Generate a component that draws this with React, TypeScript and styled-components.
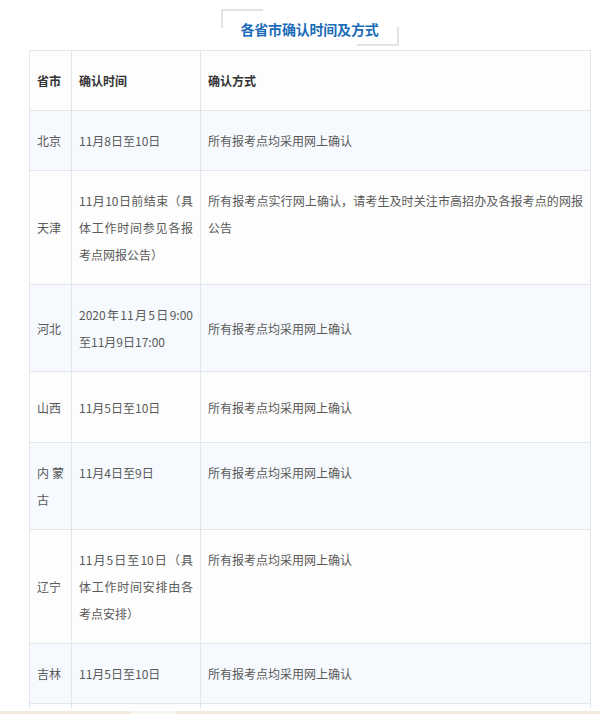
import React from "react";
import styled, { createGlobalStyle } from "styled-components";

const GlobalStyle = createGlobalStyle`
  html, body {
    margin: 0;
    padding: 0;
    background: #ffffff;
  }
  body {
    font-family: "Noto Sans CJK SC", "Noto Sans", sans-serif;
    overflow: hidden;
  }
`;

type Row = {
  province: string;
  time: string;
  method: string;
  timeTop?: boolean;
  methodTop?: boolean;
  height?: number;
};

const rows: Row[] = [
  { province: "北京", time: "11月8日至10日", method: "所有报考点均采用网上确认" },
  {
    province: "天津",
    time: "11月10日前结束（具体工作时间参见各报考点网报公告）",
    method: "所有报考点实行网上确认，请考生及时关注市高招办及各报考点的网报公告",
    methodTop: true,
  },
  { province: "河北", time: "2020年11月5日9:00至11月9日17:00", method: "所有报考点均采用网上确认" },
  { province: "山西", time: "11月5日至10日", method: "所有报考点均采用网上确认", height: 71 },
  {
    province: "内蒙古",
    time: "11月4日至9日",
    method: "所有报考点均采用网上确认",
    timeTop: true,
    methodTop: true,
  },
  {
    province: "辽宁",
    time: "11月5日至10日（具体工作时间安排由各考点安排）",
    method: "所有报考点均采用网上确认",
    methodTop: true,
  },
  { province: "吉林", time: "11月5日至10日", method: "所有报考点均采用网上确认" },
];

function App() {
  return (
    <Page>
      <GlobalStyle />
      <Heading>
        <TitleFrame>各省市确认时间及方式</TitleFrame>
      </Heading>
      <Table>
        <colgroup>
          <col style={{ width: 42 }} />
          <col style={{ width: 129 }} />
          <col />
        </colgroup>
        <thead>
          <Tr $even={false}>
            <Th>省市</Th>
            <Th>确认时间</Th>
            <Th>确认方式</Th>
          </Tr>
        </thead>
        <tbody>
          {rows.map((r, i) => (
            <Tr key={r.province} $even={i % 2 === 0} $h={r.height}>
              <Td>{r.province}</Td>
              <Td $top={r.timeTop}>{r.time}</Td>
              <Td $top={r.methodTop}>{r.method}</Td>
            </Tr>
          ))}
          {/* the next row is cut off by the bottom of the frame */}
          <Tr $even={false} $h={20}>
            <Td />
            <Td />
            <Td />
          </Tr>
        </tbody>
      </Table>
      <BottomStrip />
    </Page>
  );
}

const Page = styled.div`
  padding: 0 10px 0 29px;
`;

const Heading = styled.div`
  height: 50px;
  display: flex;
  justify-content: center;
  align-items: flex-start;
  padding-top: 9px;
  box-sizing: border-box;
`;

const TitleFrame = styled.h2`
  position: relative;
  margin: 0;
  width: 178px;
  height: 37px;
  box-sizing: border-box;
  display: flex;
  align-items: center;
  justify-content: center;
  padding-top: 2px;
  font-size: 14px;
  font-weight: 700;
  color: #1b6cb9;
  letter-spacing: -0.2px;

  &::before {
    content: "";
    position: absolute;
    left: 0;
    top: 0;
    width: 40px;
    height: 17px;
    border-top: 2px solid #e3e3e3;
    border-left: 2px solid #e3e3e3;
  }

  &::after {
    content: "";
    position: absolute;
    right: 0;
    bottom: 0;
    width: 40px;
    height: 17px;
    border-bottom: 2px solid #e3e3e3;
    border-right: 2px solid #e3e3e3;
  }
`;

const Table = styled.table`
  width: 562px;
  border-collapse: collapse;
  table-layout: fixed;
  font-size: 12px;
  line-height: 27px;
  border: 1px solid #e2e5e9;
`;

const Tr = styled.tr<{ $even: boolean; $h?: number }>`
  background: ${(p) => (p.$even ? "#f6f9fe" : "#fdfdfd")};
  height: ${(p) => (p.$h ? `${p.$h}px` : "auto")};
`;

const Th = styled.th`
  padding: 16px 7px;
  border: 1px solid #e2e5e9;
  text-align: left;
  font-weight: 700;
  color: #333333;
`;

const Td = styled.td<{ $top?: boolean }>`
  padding: 16px 7px;
  border: 1px solid #e2e5e9;
  color: #595959;
  text-align: justify;
  text-justify: inter-character;
  vertical-align: ${(p) => (p.$top ? "top" : "middle")};
  word-break: break-all;
`;

const BottomStrip = styled.div`
  position: fixed;
  left: 0;
  right: 0;
  bottom: 0;
  height: 6px;
  background: #ffffff;

  &::after {
    content: "";
    position: absolute;
    left: 0;
    right: 0;
    bottom: 0;
    height: 3px;
    background: linear-gradient(
      to right,
      #f3e9dc 0,
      #f3e9dc 130px,
      #faf5ee 130px,
      #faf5ee 176px,
      #f3e9dc 176px
    );
  }
`;

export default App;
